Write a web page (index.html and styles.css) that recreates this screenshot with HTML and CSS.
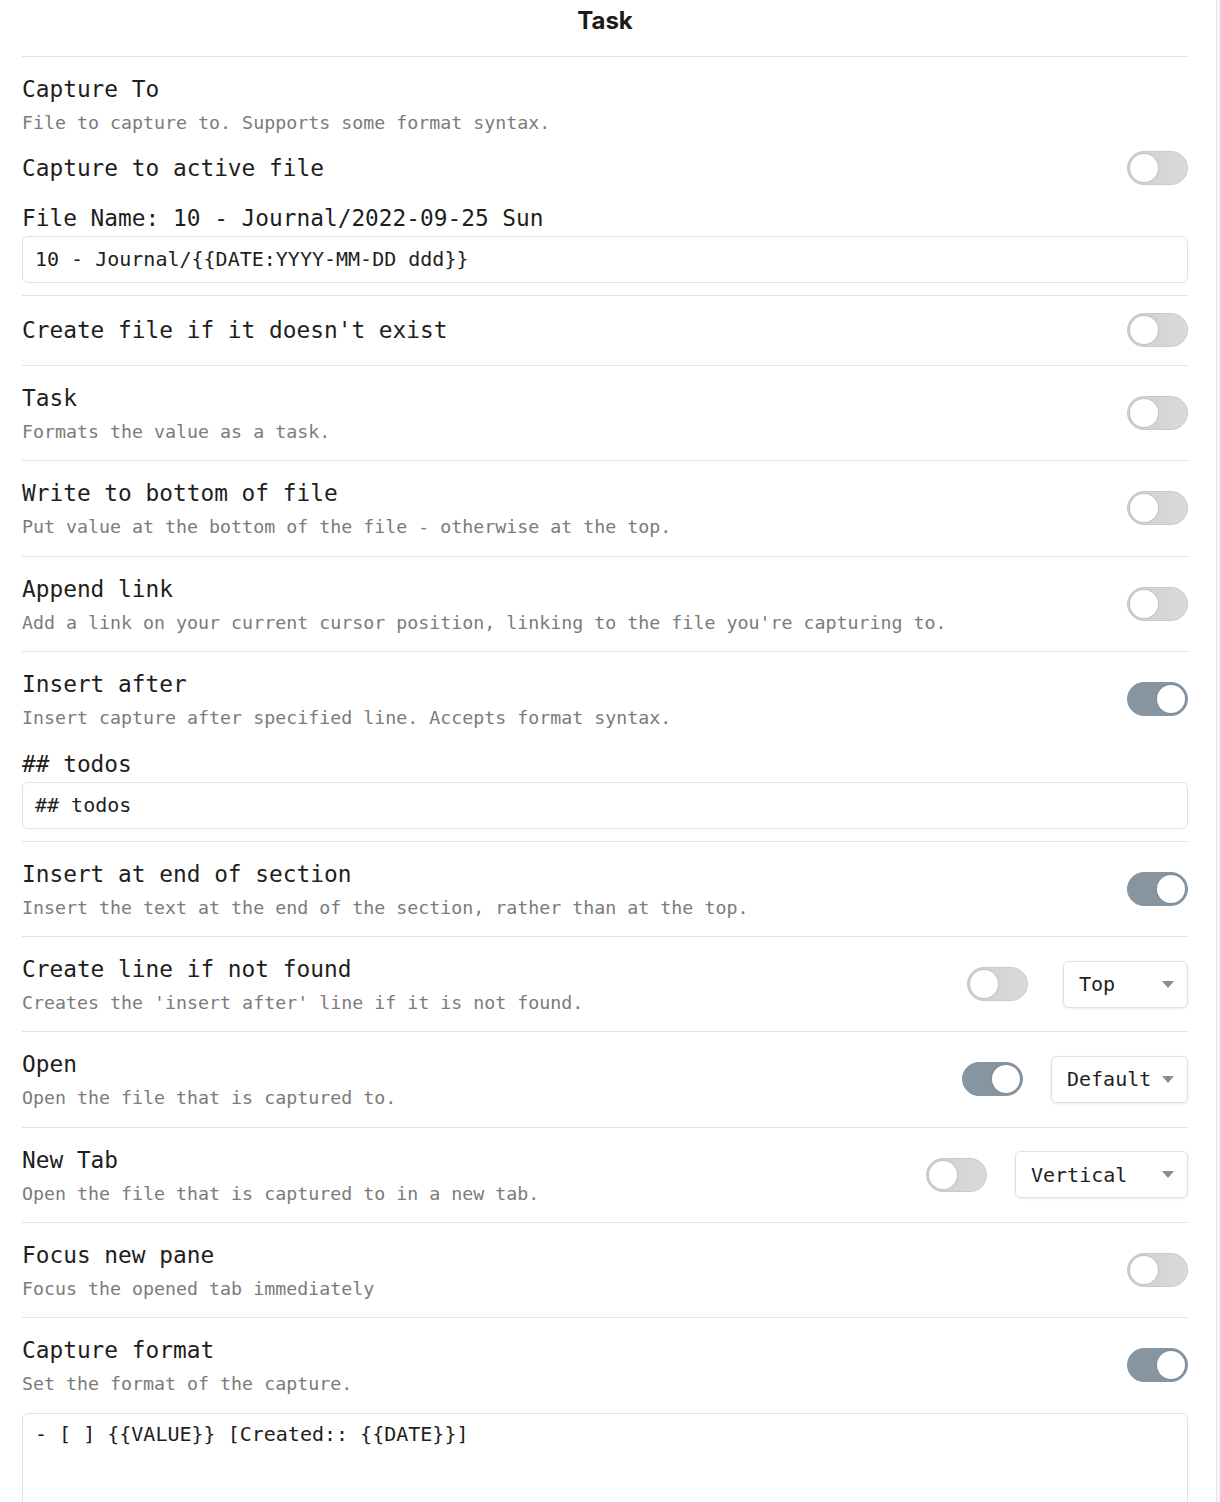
FILE: index.html
```html
<!DOCTYPE html>
<html lang="en">
<head>
    <meta charset="UTF-8">
    <meta name="viewport" content="width=device-width, initial-scale=1.0">
    <title>Task</title>
    <link rel="stylesheet" href="styles.css">
</head>
<body>
<div class="modal">
    <header class="modal-title">Task</header>

    <!-- capture target -->
    <div class="setting group">
        <div class="setting-info">
            <div class="setting-name">Capture To</div>
            <div class="setting-desc">File to capture to. Supports some format syntax.</div>
        </div>
        <div class="setting-row">
            <div class="setting-name">Capture to active file</div>
            <div class="toggle"><span class="knob"></span></div>
        </div>
        <div class="field-label">File Name: 10 - Journal/2022-09-25 Sun</div>
        <div class="text-input">10 - Journal/{{DATE:YYYY-MM-DD ddd}}</div>
    </div>

    <div class="setting single">
        <div class="setting-info">
            <div class="setting-name">Create file if it doesn't exist</div>
        </div>
        <div class="setting-control">
            <div class="toggle"><span class="knob"></span></div>
        </div>
    </div>

    <div class="setting">
        <div class="setting-info">
            <div class="setting-name">Task</div>
            <div class="setting-desc">Formats the value as a task.</div>
        </div>
        <div class="setting-control">
            <div class="toggle"><span class="knob"></span></div>
        </div>
    </div>

    <div class="setting">
        <div class="setting-info">
            <div class="setting-name">Write to bottom of file</div>
            <div class="setting-desc">Put value at the bottom of the file - otherwise at the top.</div>
        </div>
        <div class="setting-control">
            <div class="toggle"><span class="knob"></span></div>
        </div>
    </div>

    <div class="setting">
        <div class="setting-info">
            <div class="setting-name">Append link</div>
            <div class="setting-desc">Add a link on your current cursor position, linking to the file you're capturing to.</div>
        </div>
        <div class="setting-control">
            <div class="toggle"><span class="knob"></span></div>
        </div>
    </div>

    <div class="setting group">
        <div class="setting-row">
            <div class="setting-info">
                <div class="setting-name">Insert after</div>
                <div class="setting-desc">Insert capture after specified line. Accepts format syntax.</div>
            </div>
            <div class="toggle on"><span class="knob"></span></div>
        </div>
        <div class="field-label">## todos</div>
        <div class="text-input">## todos</div>
    </div>

    <div class="setting">
        <div class="setting-info">
            <div class="setting-name">Insert at end of section</div>
            <div class="setting-desc">Insert the text at the end of the section, rather than at the top.</div>
        </div>
        <div class="setting-control">
            <div class="toggle on"><span class="knob"></span></div>
        </div>
    </div>

    <div class="setting">
        <div class="setting-info">
            <div class="setting-name">Create line if not found</div>
            <div class="setting-desc">Creates the 'insert after' line if it is not found.</div>
        </div>
        <div class="setting-control wide">
            <div class="toggle"><span class="knob"></span></div>
            <div class="dropdown w-top">
                <span>Top</span>
                <svg width="12" height="7" viewBox="0 0 12 7"><path d="M0 0h12L6 7z" fill="#8c8c8c"/></svg>
            </div>
        </div>
    </div>

    <div class="setting">
        <div class="setting-info">
            <div class="setting-name">Open</div>
            <div class="setting-desc">Open the file that is captured to.</div>
        </div>
        <div class="setting-control">
            <div class="toggle on"><span class="knob"></span></div>
            <div class="dropdown w-default">
                <span>Default</span>
                <svg width="12" height="7" viewBox="0 0 12 7"><path d="M0 0h12L6 7z" fill="#8c8c8c"/></svg>
            </div>
        </div>
    </div>

    <div class="setting">
        <div class="setting-info">
            <div class="setting-name">New Tab</div>
            <div class="setting-desc">Open the file that is captured to in a new tab.</div>
        </div>
        <div class="setting-control">
            <div class="toggle"><span class="knob"></span></div>
            <div class="dropdown w-vertical">
                <span>Vertical</span>
                <svg width="12" height="7" viewBox="0 0 12 7"><path d="M0 0h12L6 7z" fill="#8c8c8c"/></svg>
            </div>
        </div>
    </div>

    <div class="setting">
        <div class="setting-info">
            <div class="setting-name">Focus new pane</div>
            <div class="setting-desc">Focus the opened tab immediately</div>
        </div>
        <div class="setting-control">
            <div class="toggle"><span class="knob"></span></div>
        </div>
    </div>

    <div class="setting group">
        <div class="setting-row">
            <div class="setting-info">
                <div class="setting-name">Capture format</div>
                <div class="setting-desc">Set the format of the capture.</div>
            </div>
            <div class="toggle on"><span class="knob"></span></div>
        </div>
        <div class="text-area">- [ ] {{VALUE}} [Created:: {{DATE}}]</div>
    </div>
</div>
</body>
</html>
```

FILE: styles.css
```css
body {
    margin: 0;
    background-color: #f6f6f6;
    font-family: "DejaVu Sans Mono", "Liberation Mono", monospace;
    color: #1e1e1e;
}

.modal {
    width: 1166px;
    min-height: 1502px;
    padding: 0 28px 0 22px;
    background-color: #fff;
    border-right: 1px solid #e4e4e4;
}

.modal-title {
    font-family: Inter, "Noto Sans", sans-serif;
    font-weight: 700;
    font-size: 24px;
    line-height: 34px;
    text-align: center;
    padding: 4px 0 18px;
    border-bottom: 1px solid #e3e3e3;
    color: #1a1a1a;
}

.setting {
    display: flex;
    align-items: center;
    justify-content: space-between;
    padding: 14px 0 14.3px;
    border-top: 1px solid #e3e3e3;
}

.modal-title + .setting {
    border-top: none;
}

.setting.single {
    padding: 16px 0 17px;
}

.setting.group {
    display: block;
    padding-bottom: 12px;
}

.setting-row {
    display: flex;
    align-items: center;
    justify-content: space-between;
}

.group > .setting-info + .setting-row {
    margin-top: 13px;
}

.setting-name {
    font-size: 22.8px;
    line-height: 36px;
    color: #1e1e1e;
    white-space: pre;
}

.setting-desc {
    font-size: 18.3px;
    line-height: 30px;
    padding-top: 1px;
    margin-bottom: -1px;
    color: #7b7b7b;
    white-space: pre;
}

.setting-control {
    display: flex;
    align-items: center;
    gap: 28px;
}

.setting-control.wide {
    gap: 35px;
}

.field-label {
    margin-top: 14px;
    font-size: 22.8px;
    line-height: 36px;
    white-space: pre;
}

.text-input {
    height: 45px;
    border: 1px solid #e2e2e2;
    border-radius: 6px;
    padding: 0 12px;
    font-size: 20px;
    line-height: 45px;
    white-space: pre;
}

.text-area {
    margin-top: 15px;
    height: 140px;
    border: 1px solid #e2e2e2;
    border-radius: 6px;
    padding: 6px 12px;
    font-size: 20px;
    line-height: 28px;
    white-space: pre;
}

.toggle {
    box-sizing: border-box;
    width: 61px;
    height: 34px;
    border-radius: 17px;
    padding: 2px;
    display: flex;
    justify-content: flex-start;
    background: linear-gradient(90deg, #cfcfcf, #dadada);
    border: 1px solid #c9c9c9;
}

.toggle .knob {
    width: 28px;
    height: 28px;
    border-radius: 50%;
    background-color: #fff;
    box-shadow: 0 0 0 1px #c2c2c2;
}

.toggle.on {
    justify-content: flex-end;
    background: #8795a1;
    border-color: #8795a1;
}

.toggle.on .knob {
    box-shadow: 0 0 0 1px #7d8b97;
}

.dropdown {
    box-sizing: border-box;
    height: 47px;
    display: flex;
    align-items: center;
    justify-content: space-between;
    padding: 0 13px 0 15px;
    border: 1px solid #e0e0e0;
    border-radius: 6px;
    box-shadow: 0 1px 3px rgba(0, 0, 0, 0.08);
    font-size: 20px;
    background-color: #fff;
}

.w-top {
    width: 125px;
}

.w-default {
    width: 137px;
}

.w-vertical {
    width: 173px;
}
```
